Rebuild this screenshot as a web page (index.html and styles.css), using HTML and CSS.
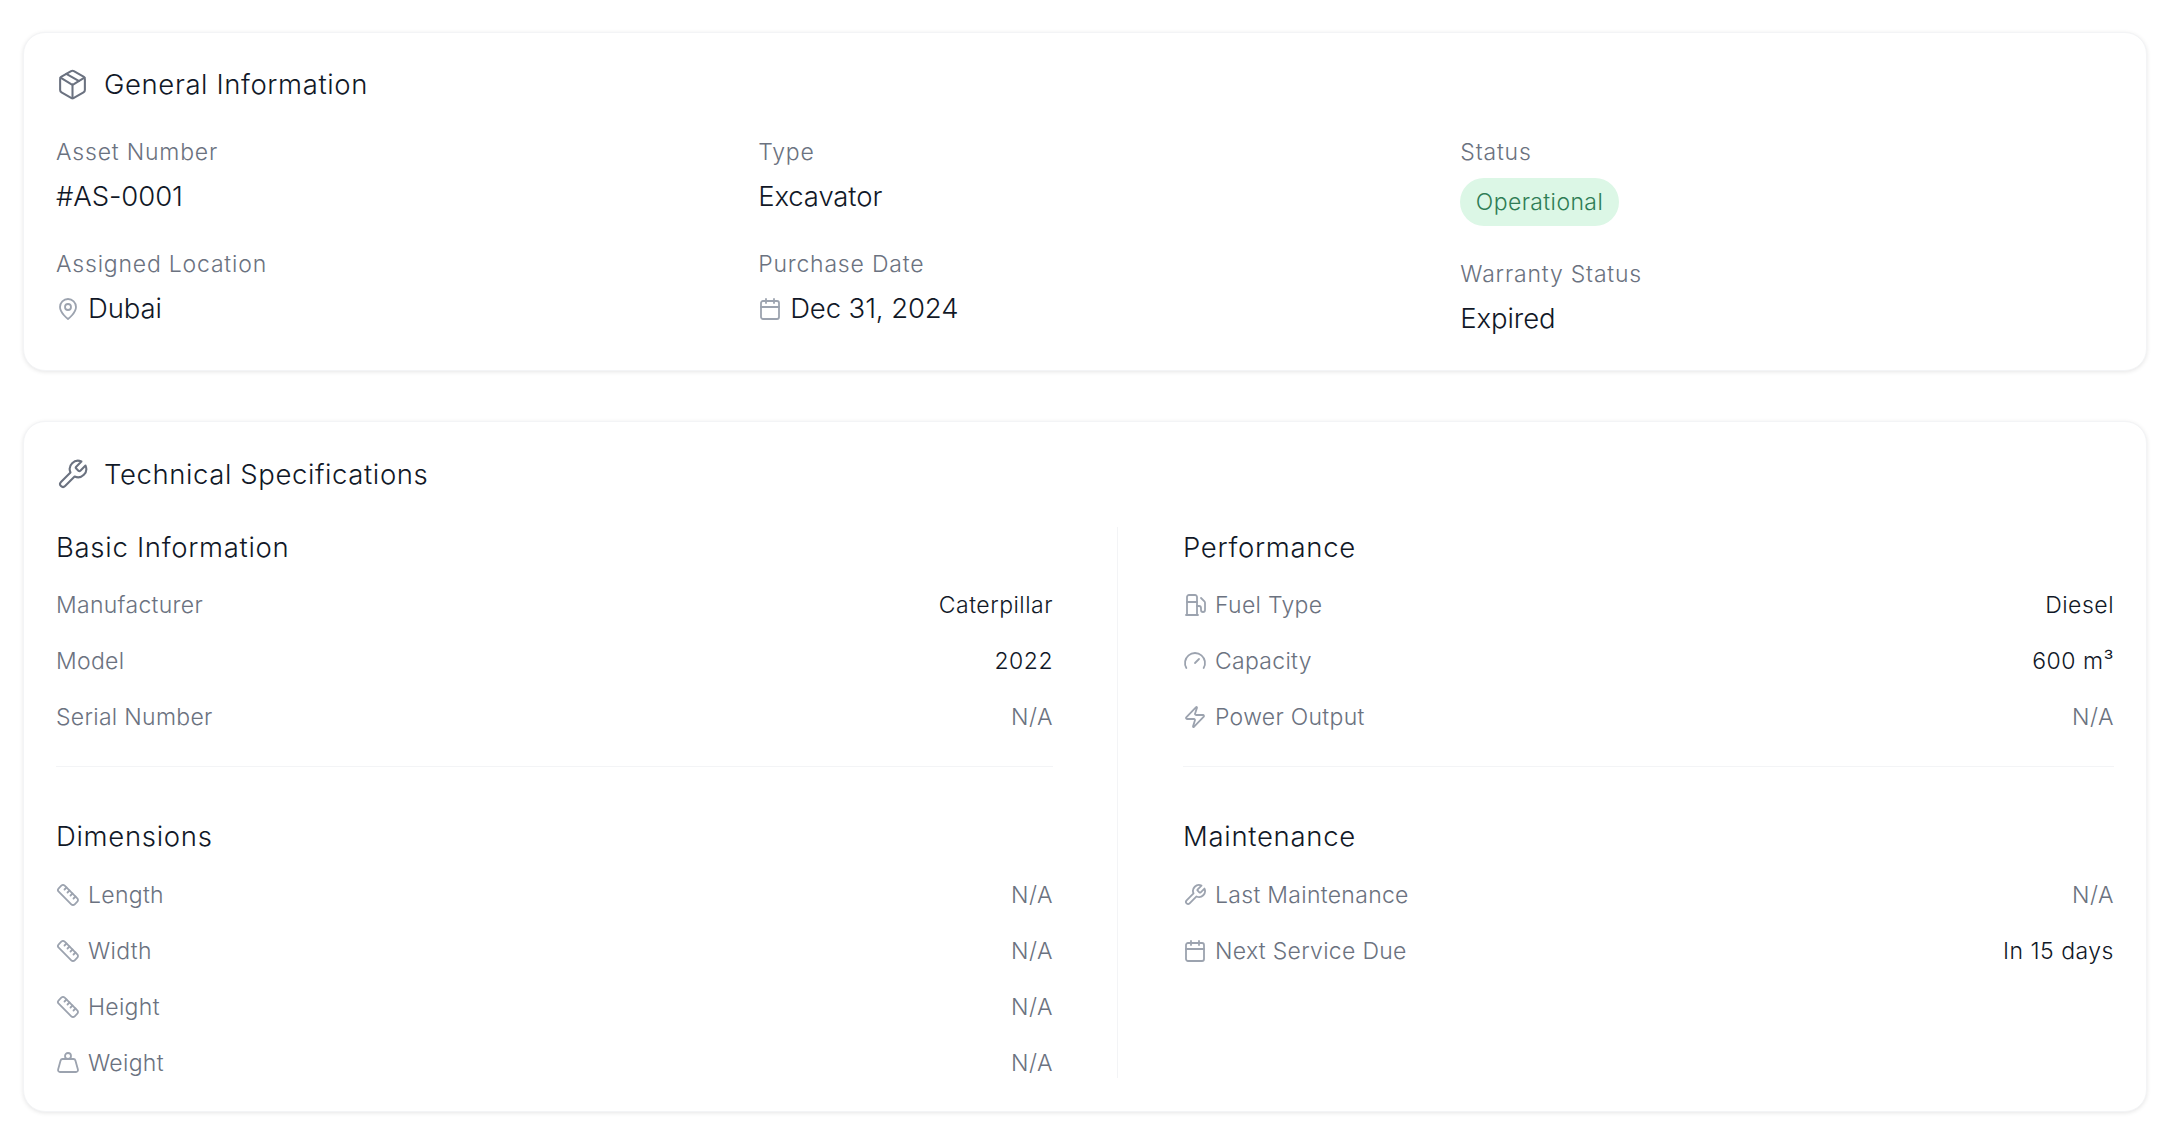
FILE: index.html
```html
<!DOCTYPE html>
<html>
<head>
    <title>Asset Details</title>
    <link rel="stylesheet" href="styles.css">
</head>
<body>
    <svg class="icon-defs" width="0" height="0">
        <symbol id="i-package" viewBox="0 0 24 24"><path d="M11 21.73a2 2 0 0 0 2 0l7-4A2 2 0 0 0 21 16V8a2 2 0 0 0-1-1.73l-7-4a2 2 0 0 0-2 0l-7 4A2 2 0 0 0 3 8v8a2 2 0 0 0 1 1.73z"/><path d="M12 22V12"/><path d="m3.3 7 7.703 4.734a2 2 0 0 0 1.994 0L20.7 7"/><path d="m7.5 4.27 9 5.15"/></symbol>
        <symbol id="i-wrench" viewBox="0 0 24 24"><path d="M14.7 6.3a1 1 0 0 0 0 1.4l1.6 1.6a1 1 0 0 0 1.4 0l3.77-3.77a6 6 0 0 1-7.94 7.94l-6.91 6.91a2.12 2.12 0 0 1-3-3l6.91-6.91a6 6 0 0 1 7.94-7.94l-3.76 3.76z"/></symbol>
        <symbol id="i-pin" viewBox="0 0 24 24"><path d="M20 10c0 6-8 12-8 12s-8-6-8-12a8 8 0 0 1 16 0Z"/><circle cx="12" cy="10" r="3"/></symbol>
        <symbol id="i-calendar" viewBox="0 0 24 24"><path d="M8 2v4"/><path d="M16 2v4"/><rect x="3" y="4" width="18" height="18" rx="2"/><path d="M3 10h18"/></symbol>
        <symbol id="i-ruler" viewBox="0 0 24 24"><path d="M21.3 15.3a2.4 2.4 0 0 1 0 3.4l-2.6 2.6a2.4 2.4 0 0 1-3.4 0L2.7 8.7a2.41 2.41 0 0 1 0-3.4l2.6-2.6a2.41 2.41 0 0 1 3.4 0Z"/><path d="m14.5 12.5 2-2"/><path d="m11.5 9.5 2-2"/><path d="m8.5 6.5 2-2"/><path d="m17.5 15.5 2-2"/></symbol>
        <symbol id="i-weight" viewBox="0 0 24 24"><circle cx="12" cy="5" r="3"/><path d="M6.5 8a2 2 0 0 0-1.905 1.46L2.1 18.5A2 2 0 0 0 4 21h16a2 2 0 0 0 1.925-2.54L19.4 9.5A2 2 0 0 0 17.48 8Z"/></symbol>
        <symbol id="i-fuel" viewBox="0 0 24 24"><path d="M3 22h12"/><path d="M4 9h10"/><path d="M14 22V4a2 2 0 0 0-2-2H6a2 2 0 0 0-2 2v18"/><path d="M14 13h2a2 2 0 0 1 2 2v2a2 2 0 0 0 2 2a2 2 0 0 0 2-2V9.83a2 2 0 0 0-.59-1.42L18 5"/></symbol>
        <symbol id="i-gauge" viewBox="0 0 24 24"><path d="m12 14 4-4"/><path d="M3.34 19a10 10 0 1 1 17.32 0"/></symbol>
        <symbol id="i-zap" viewBox="0 0 24 24"><path d="M4 14a1 1 0 0 1-.78-1.63l9.9-10.2a.5.5 0 0 1 .86.46l-1.92 6.02A1 1 0 0 0 13 10h7a1 1 0 0 1 .78 1.63l-9.9 10.2a.5.5 0 0 1-.86-.46l1.92-6.02A1 1 0 0 0 11 14z"/></symbol>
    </svg>

    <section class="card card-general">
        <h2 class="card-title"><svg class="icon-title"><use href="#i-package"/></svg>General Information</h2>
        <div class="info-grid">
            <div class="info-col">
                <div class="field">
                    <div class="field-label">Asset Number</div>
                    <div class="field-value">#AS-0001</div>
                </div>
                <div class="field">
                    <div class="field-label">Assigned Location</div>
                    <div class="field-value"><svg class="icon"><use href="#i-pin"/></svg>Dubai</div>
                </div>
            </div>
            <div class="info-col">
                <div class="field">
                    <div class="field-label">Type</div>
                    <div class="field-value">Excavator</div>
                </div>
                <div class="field">
                    <div class="field-label">Purchase Date</div>
                    <div class="field-value"><svg class="icon"><use href="#i-calendar"/></svg>Dec 31, 2024</div>
                </div>
            </div>
            <div class="info-col">
                <div class="field field-status">
                    <div class="field-label">Status</div>
                    <div class="field-badge"><span class="badge">Operational</span></div>
                </div>
                <div class="field">
                    <div class="field-label">Warranty Status</div>
                    <div class="field-value">Expired</div>
                </div>
            </div>
        </div>
    </section>

    <section class="card card-specs">
        <h2 class="card-title"><svg class="icon-title"><use href="#i-wrench"/></svg>Technical Specifications</h2>
        <div class="spec-grid">
            <div class="spec-col spec-left">
                <div class="spec-group spec-group-first">
                    <h3 class="group-title">Basic Information</h3>
                    <div class="spec-row"><span class="spec-label">Manufacturer</span><span class="spec-value">Caterpillar</span></div>
                    <div class="spec-row"><span class="spec-label">Model</span><span class="spec-value">2022</span></div>
                    <div class="spec-row"><span class="spec-label">Serial Number</span><span class="spec-value muted">N/A</span></div>
                </div>
                <div class="spec-group spec-group-last">
                    <h3 class="group-title">Dimensions</h3>
                    <div class="spec-row"><span class="spec-label"><svg class="icon"><use href="#i-ruler"/></svg>Length</span><span class="spec-value muted">N/A</span></div>
                    <div class="spec-row"><span class="spec-label"><svg class="icon"><use href="#i-ruler"/></svg>Width</span><span class="spec-value muted">N/A</span></div>
                    <div class="spec-row"><span class="spec-label"><svg class="icon"><use href="#i-ruler"/></svg>Height</span><span class="spec-value muted">N/A</span></div>
                    <div class="spec-row"><span class="spec-label"><svg class="icon"><use href="#i-weight"/></svg>Weight</span><span class="spec-value muted">N/A</span></div>
                </div>
            </div>
            <div class="spec-col spec-right">
                <div class="spec-group spec-group-first">
                    <h3 class="group-title">Performance</h3>
                    <div class="spec-row"><span class="spec-label"><svg class="icon"><use href="#i-fuel"/></svg>Fuel Type</span><span class="spec-value">Diesel</span></div>
                    <div class="spec-row"><span class="spec-label"><svg class="icon"><use href="#i-gauge"/></svg>Capacity</span><span class="spec-value">600 m³</span></div>
                    <div class="spec-row"><span class="spec-label"><svg class="icon"><use href="#i-zap"/></svg>Power Output</span><span class="spec-value muted">N/A</span></div>
                </div>
                <div class="spec-group spec-group-last">
                    <h3 class="group-title">Maintenance</h3>
                    <div class="spec-row"><span class="spec-label"><svg class="icon"><use href="#i-wrench"/></svg>Last Maintenance</span><span class="spec-value muted">N/A</span></div>
                    <div class="spec-row"><span class="spec-label"><svg class="icon"><use href="#i-calendar"/></svg>Next Service Due</span><span class="spec-value">In 15 days</span></div>
                </div>
            </div>
        </div>
    </section>
</body>
</html>
```

FILE: styles.css
```css
body {
    margin: 0;
    padding: 32px 33px 0 23px;
    background-color: #fff;
    color: #111827;
    font-family: Inter, "Liberation Sans", sans-serif;
    font-size: 23px;
    font-weight: 300;
    height: 1104px;
    overflow: hidden;
}
.icon-defs {
    position: absolute;
}
.card {
    background-color: #fff;
    border: 1px solid #f3f4f6;
    border-radius: 22px;
    box-shadow: 0 1px 4px rgba(0, 0, 0, 0.1);
    padding: 0 32px;
    box-sizing: border-box;
}
.card-general {
    height: 339px;
    margin-bottom: 50px;
}
.card-specs {
    height: 691px;
}
.card-title {
    display: flex;
    align-items: center;
    gap: 15px;
    margin: 0;
    padding-top: 35px;
    font-size: 27.5px;
    font-weight: 300;
    line-height: 33px;
    letter-spacing: 0.6px;
}
.card-specs .card-title {
    padding-top: 36px;
}
.icon-title {
    width: 33px;
    height: 33px;
    flex: none;
    fill: none;
    stroke: #6b7280;
    stroke-width: 1.5;
    stroke-linecap: round;
    stroke-linejoin: round;
}
.icon {
    width: 24px;
    height: 24px;
    flex: none;
    fill: none;
    stroke: #9ca3af;
    stroke-width: 1.8;
    stroke-linecap: round;
    stroke-linejoin: round;
}
.info-grid {
    display: grid;
    grid-template-columns: repeat(3, 1fr);
    column-gap: 48.5px;
    margin-top: 37px;
}
.field {
    margin-bottom: 37px;
}
.field-status {
    margin-bottom: 34px;
}
.field-label {
    color: #6b7280;
    line-height: 28px;
    letter-spacing: 0.8px;
}
.field-value {
    display: flex;
    align-items: center;
    gap: 8px;
    margin-top: 14px;
    font-size: 27.5px;
    line-height: 33px;
    letter-spacing: -0.1px;
}
.field-badge {
    margin-top: 12px;
}
.badge {
    display: inline-block;
    padding: 0 15.5px;
    border-radius: 24px;
    background-color: #dcf7e6;
    color: #2f7d55;
    line-height: 48px;
    letter-spacing: 0.4px;
}
.spec-grid {
    display: grid;
    grid-template-columns: 1062px 1fr;
    margin-top: 36px;
}
.spec-col {
    padding-top: 4px;
    padding-bottom: 1px;
}
.spec-left {
    padding-right: 64px;
    border-right: 1px solid #f3f4f6;
}
.spec-right {
    padding-left: 65px;
}
.spec-group-first {
    height: 235px;
    border-bottom: 1px solid #f3f4f6;
    margin-bottom: 53px;
}
.group-title {
    margin: 0 0 27px;
    font-size: 27.5px;
    font-weight: 300;
    line-height: 33px;
    letter-spacing: 0.7px;
}
.spec-group-last .group-title {
    margin-bottom: 28px;
}
.spec-row {
    display: flex;
    justify-content: space-between;
    align-items: center;
    height: 28px;
    margin-bottom: 28px;
}
.spec-row:last-child {
    margin-bottom: 0;
}
.spec-label {
    display: flex;
    align-items: center;
    gap: 8px;
    color: #6b7280;
    letter-spacing: 0.3px;
}
.spec-value {
    color: #111827;
    letter-spacing: 0.5px;
}
.muted {
    color: #6b7280;
}
```
